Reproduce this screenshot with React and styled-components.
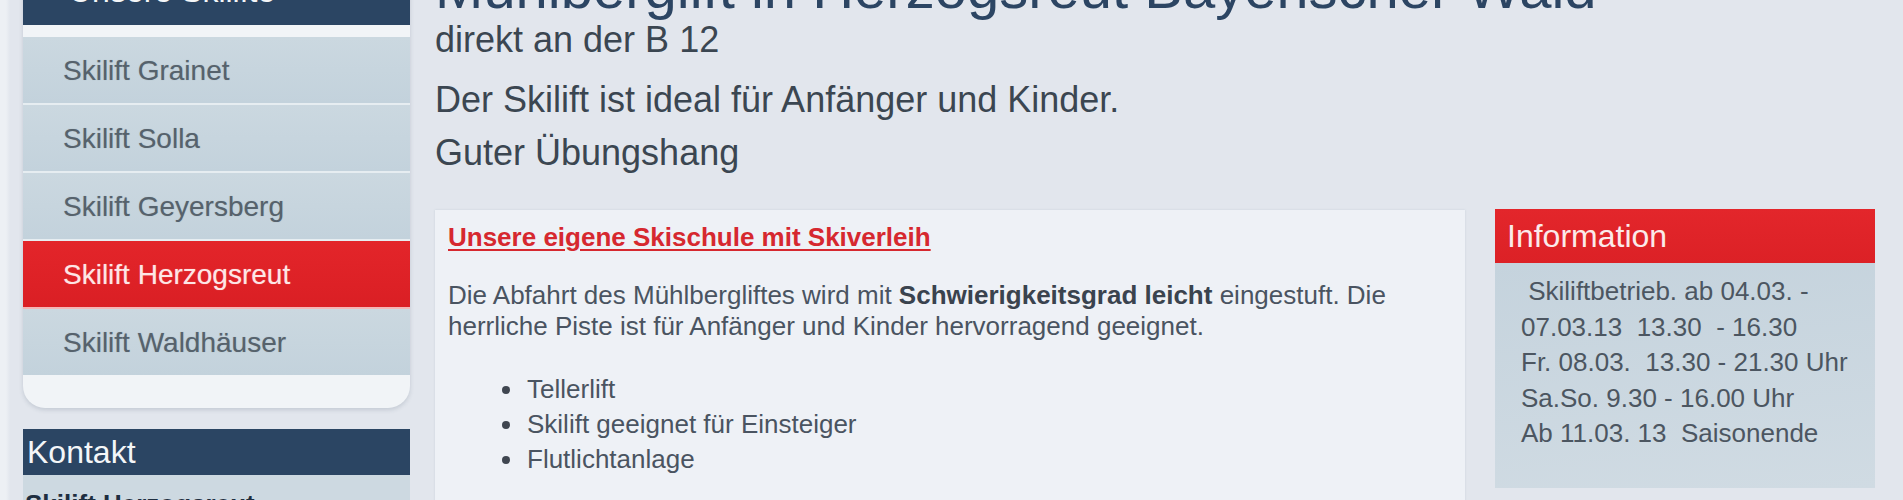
import React from "react";
import styled, { createGlobalStyle } from "styled-components";

const Global = createGlobalStyle`
  html, body { margin: 0; padding: 0; }
  body {
    background: #e2e6ed;
    font-family: "Liberation Sans", Arial, sans-serif;
    overflow: hidden;
  }
`;

const Page = styled.div`
  display: flex;
  align-items: flex-start;
  gap: 25px;
  margin-top: -60px;
  padding-left: 23px;
  width: 1903px;
  box-sizing: border-box;
  background: linear-gradient(to right, #edf0f4 0, #edf0f4 6px, #e2e6ed 10px);
`;

const Sidebar = styled.aside`
  width: 387px;
  flex: none;
  display: flex;
  flex-direction: column;
`;

const NavBox = styled.nav`
  background: #f1f4f7;
  border-radius: 0 0 22px 22px;
  box-shadow: 0 2px 4px rgba(60, 80, 100, 0.18);
  padding-bottom: 33px;
`;

const BarHeading = styled.h3`
  margin: 0;
  background: #2b4563;
  color: #f4f6f8;
  font-weight: normal;
  font-size: ${(p) => p.$size || 32}px;
  line-height: ${(p) => p.$lh || 46}px;
  padding: ${(p) => p.$pad || "0 4px"};
`;

const NavList = styled.ul`
  list-style: none;
  margin: 12px 0 0;
  padding: 0;
`;

const NavItem = styled.li`
  height: 66px;
  line-height: 67px;
  border-bottom: 2px solid ${(p) => (p.$active ? "#f4b6b6" : "#e6edf1")};
  padding-left: 40px;
  font-size: 28px;
  color: ${(p) => (p.$active ? "#fde6e6" : "#56626c")};
  text-shadow: ${(p) =>
    p.$active ? "0 0 1px rgba(255,200,200,0.6)" : "0 0 1px rgba(80,95,105,0.35)"};
  background: ${(p) =>
    p.$active
      ? "linear-gradient(#e3252a, #da1f24)"
      : "linear-gradient(to bottom, #cbd8e0, #c3d2dc)"};
  &:last-child {
    border-bottom: none;
  }
`;

const ContactBox = styled.section`
  margin-top: 21px;
  background: #cdd9e1;
`;

const ContactName = styled.div`
  padding: 14px 2px 0;
  font-size: 26px;
  line-height: 30px;
  font-weight: bold;
  color: #1e2e40;
`;

const Main = styled.main`
  flex: none;
  width: 1440px;
  display: flex;
  flex-direction: column;
`;

const Title = styled.h1`
  margin: 18px 0 0;
  font-size: 58px;
  line-height: 60px;
  font-weight: normal;
  color: #2c4563;
  white-space: nowrap;
`;

const Sub = styled.h2`
  margin: 0;
  font-size: 36px;
  line-height: 44px;
  font-weight: normal;
  color: #3b4651;
`;

const Lead = styled.p`
  margin: ${(p) => (p.$first ? "11px 0 0" : "0")};
  font-size: 36px;
  line-height: 53px;
  color: #3b4651;
`;

const Columns = styled.div`
  display: flex;
  align-items: flex-start;
  gap: 30px;
  margin-top: 31px;
`;

const ContentBox = styled.article`
  width: 1030px;
  flex: none;
  min-height: 320px;
  box-sizing: border-box;
  background: #eef1f6;
  box-shadow: 0 0 2px rgba(90, 110, 130, 0.18);
  padding: 12px 12px 0 13px;
  color: #4a5461;
  font-size: 26px;
`;

const SchoolLink = styled.a`
  display: block;
  font-weight: bold;
  line-height: 30px;
  color: #d6282f;
  text-decoration: underline;
  text-decoration-thickness: 2px;
  text-underline-offset: 3px;
`;

const Text = styled.p`
  margin: 28px 0 0;
  line-height: 31px;
  b {
    color: #3a434e;
  }
`;

const Bullets = styled.ul`
  margin: 30px 0 0;
  padding-left: 79px;
  line-height: 35px;
  list-style: none;
  li {
    display: flex;
    align-items: center;
  }
  li::before {
    content: "";
    flex: none;
    width: 8px;
    height: 8px;
    border-radius: 50%;
    background: #3f4650;
    margin: 0 17px 0 -25px;
  }
`;

const InfoBox = styled.aside`
  width: 380px;
  flex: none;
  margin-top: -1px;
`;

const InfoHead = styled.h3`
  margin: 0;
  background: linear-gradient(#e3262b, #dc2126);
  color: #fbeaea;
  font-weight: normal;
  font-size: 32px;
  line-height: 54px;
  padding-left: 12px;
`;

const InfoBody = styled.div`
  background: linear-gradient(175deg, #c5d3dd, #d0dbe3);
  padding: 11px 10px 36px 26px;
  font-size: 26px;
  line-height: 35.5px;
  color: #4c5661;
`;

const InfoLine = styled.div`
  white-space: pre;
`;

const navItems = [
  "Skilift Grainet",
  "Skilift Solla",
  "Skilift Geyersberg",
  "Skilift Herzogsreut",
  "Skilift Waldhäuser",
];

const infoLines = [
  " Skiliftbetrieb. ab 04.03. -",
  "07.03.13  13.30  - 16.30",
  "Fr. 08.03.  13.30 - 21.30 Uhr",
  "Sa.So. 9.30 - 16.00 Uhr",
  "Ab 11.03. 13  Saisonende",
];

export default function App() {
  return (
    <>
      <Global />
      <Page>
        <Sidebar>
          <NavBox>
            <BarHeading $size={32} $lh={40} $pad="31px 10px 14px 46px">
              Unsere Skilifte
            </BarHeading>
            <NavList>
              {navItems.map((n) => (
                <NavItem key={n} $active={n === "Skilift Herzogsreut"}>
                  {n}
                </NavItem>
              ))}
            </NavList>
          </NavBox>
          <ContactBox>
            <BarHeading>Kontakt</BarHeading>
            <ContactName>Skilift Herzogsreut</ContactName>
          </ContactBox>
        </Sidebar>
        <Main>
          <Title>Mühlberglift in Herzogsreut Bayerischer Wald</Title>
          <Sub>direkt an der B 12</Sub>
          <Lead $first>Der Skilift ist ideal für Anfänger und Kinder.</Lead>
          <Lead>Guter Übungshang</Lead>
          <Columns>
            <ContentBox>
              <SchoolLink href="#">Unsere eigene Skischule mit Skiverleih</SchoolLink>
              <Text>
                Die Abfahrt des Mühlbergliftes wird mit <b>Schwierigkeitsgrad leicht</b> eingestuft. Die
                <br />
                herrliche Piste ist für Anfänger und Kinder hervorragend geeignet.
              </Text>
              <Bullets>
                <li>Tellerlift</li>
                <li>Skilift geeignet für Einsteiger</li>
                <li>Flutlichtanlage</li>
              </Bullets>
            </ContentBox>
            <InfoBox>
              <InfoHead>Information</InfoHead>
              <InfoBody>
                {infoLines.map((l) => (
                  <InfoLine key={l}>{l}</InfoLine>
                ))}
              </InfoBody>
            </InfoBox>
          </Columns>
        </Main>
      </Page>
    </>
  );
}
